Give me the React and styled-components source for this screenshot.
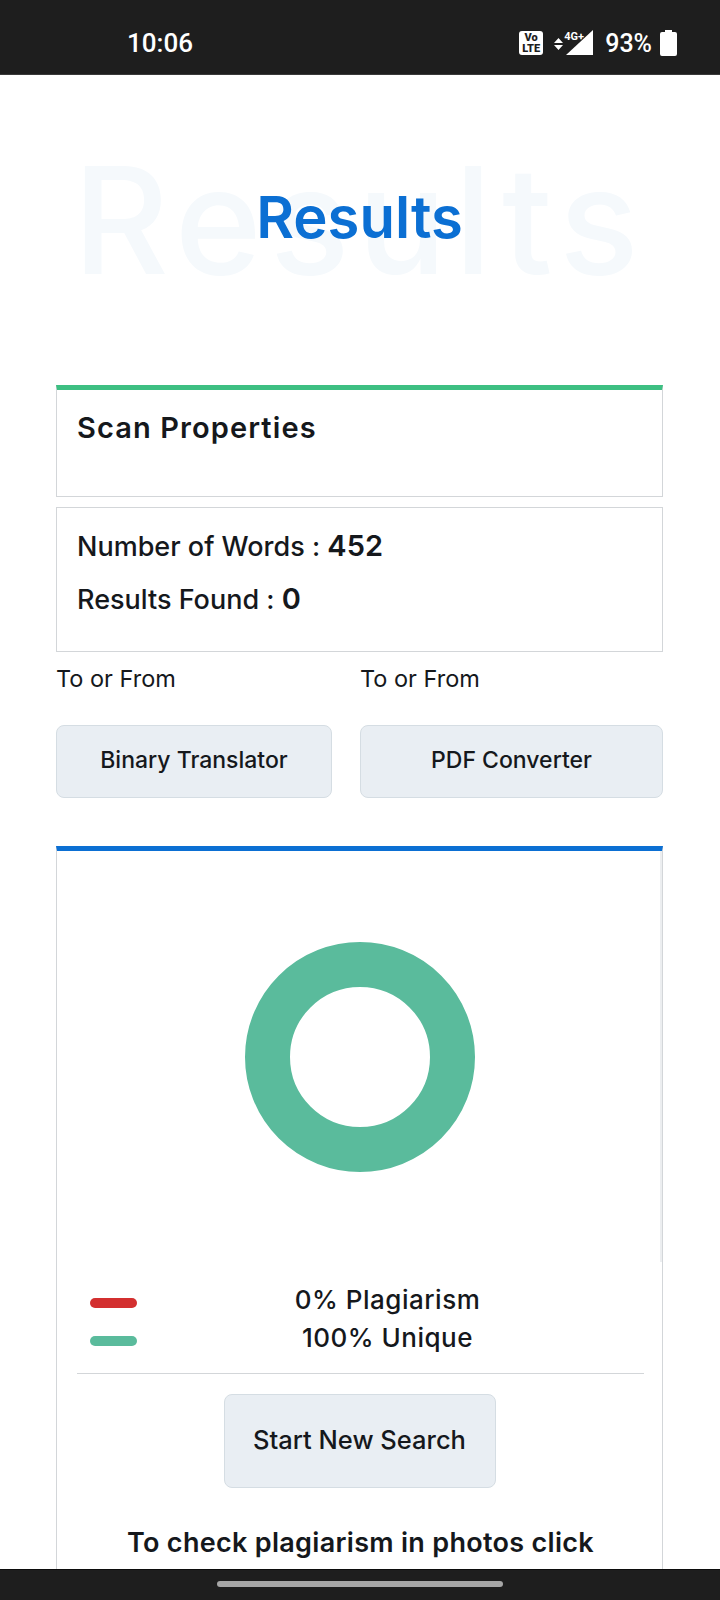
import React from "react";
import styled, { createGlobalStyle } from "styled-components";

const Global = createGlobalStyle`
  html, body { margin: 0; padding: 0; background: #fff; }
  * { box-sizing: border-box; }
  body { font-family: Inter, "Noto Sans", sans-serif; color: #15181c; }
`;

const Screen = styled.div`
  width: 720px;
  height: 1600px;
  display: flex;
  flex-direction: column;
  overflow: hidden;
`;

const StatusBar = styled.div`
  height: 75px;
  flex: none;
  background: #1e1e1e;
  border-bottom: 1px solid #3a3a3a;
  display: flex;
  align-items: center;
  justify-content: space-between;
  padding: 12px 43px 0 127px;
  color: #fff;
  font-family: Roboto, sans-serif;
`;

const Clock = styled.span`
  font-size: 26px;
  font-weight: 500;
`;

const StatusIcons = styled.div`
  display: flex;
  align-items: center;
`;

const VolteBadge = styled.div`
  width: 24px;
  height: 24px;
  border-radius: 3px;
  background: #fff;
  color: #1e1e1e;
  font-size: 11px;
  font-weight: 900;
  line-height: 11px;
  text-align: center;
  padding-top: 1px;
  margin-right: 11px;
`;

const Signal = styled.div`
  position: relative;
  width: 39px;
  height: 26px;
  margin-right: 12px;
`;

const NetworkLabel = styled.span`
  position: absolute;
  left: 10px;
  top: 1px;
  font-size: 11px;
  line-height: 11px;
  font-weight: 700;
`;

const Percent = styled.span`
  font-size: 25px;
  font-weight: 500;
  margin-right: 8px;
`;

const Content = styled.main`
  flex: 1;
  min-height: 0;
  overflow: hidden;
  padding: 0 57px 0 56px;
`;

const Hero = styled.div`
  position: relative;
  height: 310px;
  display: flex;
  align-items: center;
  justify-content: center;
  padding-bottom: 26px;
`;

const Watermark = styled.span`
  position: absolute;
  left: 17px;
  top: 57px;
  font-size: 148px;
  line-height: 1.2;
  font-weight: 500;
  letter-spacing: 8px;
  color: #f5f9fc;
  white-space: nowrap;
`;

const HeroTitle = styled.h1`
  position: relative;
  margin: 0;
  font-size: 58px;
  font-weight: 600;
  color: #0b6fd3;
`;

const Panel = styled.section`
  border: 1px solid #d3d6d9;
  margin-bottom: 10px;
  padding: ${(p) => p.$pad};
  height: ${(p) => p.$height};
  ${(p) => p.$accent && `border-top: 5px solid ${p.$accent};`}
`;

const PanelTitle = styled.h2`
  margin: 0;
  font-size: 29px;
  line-height: 40px;
  font-weight: 600;
  letter-spacing: 1.1px;
`;

const Stat = styled.p`
  margin: 0 0 16px;
  font-size: 27px;
  line-height: 36px;
  font-weight: 500;
`;

const StatValue = styled.b`
  font-size: 29px;
  font-weight: 600;
`;

const LinkGrid = styled.div`
  display: grid;
  grid-template-columns: 276px 303px;
  column-gap: 28px;
  margin-top: 13px;
`;

const LinkColumn = styled.div`
  display: flex;
  flex-direction: column;
  gap: 32px;
`;

const LinkLabel = styled.span`
  font-size: 23.5px;
  line-height: 28px;
`;

const SoftButton = styled.button`
  height: ${(p) => p.$height || "73px"};
  width: ${(p) => p.$width || "100%"};
  background: #e9eef3;
  border: 1px solid #d5dde3;
  border-radius: 8px;
  color: #15181c;
  font-family: inherit;
  font-size: ${(p) => p.$size || "23px"};
  font-weight: 500;
  padding: 0 0 4px;
`;

const ChartCard = styled.section`
  margin-top: 48px;
  border-top: 5px solid #0b6fd3;
  border-left: 1px solid #d3d6d9;
  border-right: 1px solid #d3d6d9;
  padding: 0 18px 0 20px;
  height: 740px;
  display: flex;
  flex-direction: column;
`;

const ChartArea = styled.div`
  height: 411px;
  margin: 0 -18px 0 -20px;
  border-right: 2px solid #eceef0;
  display: flex;
  justify-content: center;
  align-items: center;
  padding-left: 3px;
`;

const Donut = styled.div`
  width: 230px;
  height: 230px;
  border-radius: 50%;
  border: 45px solid #5abb9c;
`;

const Legend = styled.div`
  display: flex;
  flex-direction: column;
  gap: 8px;
  margin-top: 22px;
  padding-bottom: 21px;
  border-bottom: 1px solid #d3d6d9;
`;

const LegendRow = styled.div`
  height: 30px;
  display: grid;
  grid-template-columns: 13px 47px 1fr;
  align-items: center;
`;

const LegendBar = styled.span`
  grid-column: 2;
  height: 10px;
  border-radius: 5px;
  background: ${(p) => p.$color};
  margin-top: 6px;
`;

const LegendText = styled.span`
  grid-column: 3;
  text-align: center;
  font-size: 26px;
  font-weight: 500;
  letter-spacing: 0.5px;
  padding-right: 6px;
`;

const Action = styled.div`
  display: flex;
  justify-content: center;
  margin-top: 20px;
  padding-right: 2px;
`;

const Hint = styled.p`
  margin: 35px -10px 0;
  text-align: center;
  font-size: 27px;
  line-height: 40px;
  font-weight: 600;
  letter-spacing: 0.3px;
  white-space: nowrap;
`;

const NavBar = styled.div`
  height: 31px;
  flex: none;
  background: #1e1e1e;
  border-top: 1px solid #0c0c0c;
  display: flex;
  justify-content: center;
  padding-top: 11px;
`;

const NavPill = styled.div`
  width: 286px;
  height: 6px;
  border-radius: 3px;
  background: #a6a6a6;
`;

export default function App() {
  return (
    <Screen>
      <Global />
      <StatusBar>
        <Clock>10:06</Clock>
        <StatusIcons>
          <VolteBadge>
            Vo
            <br />
            LTE
          </VolteBadge>
          <Signal>
            <NetworkLabel>4G+</NetworkLabel>
            <svg width="39" height="26" viewBox="0 0 39 26" fill="#fff">
              <path d="M12 25 L39 0 V25 Z" />
              <path d="M0 13 L4.5 8 L9 13 Z M0 15 H9 L4.5 20 Z" />
            </svg>
          </Signal>
          <Percent>93%</Percent>
          <svg width="17" height="26" viewBox="0 0 17 26" fill="#fff">
            <path d="M5 0 H12 V2 H15 A2 2 0 0 1 17 4 V24 A2 2 0 0 1 15 26 H2 A2 2 0 0 1 0 24 V4 A2 2 0 0 1 2 2 H5 Z" />
          </svg>
        </StatusIcons>
      </StatusBar>
      <Content>
        <Hero>
          <Watermark>Results</Watermark>
          <HeroTitle>Results</HeroTitle>
        </Hero>
        <Panel $accent="#3dbf82" $height="112px" $pad="18px 20px">
          <PanelTitle>Scan Properties</PanelTitle>
        </Panel>
        <Panel $height="145px" $pad="20px 20px">
          <Stat>
            Number of Words : <StatValue>452</StatValue>
          </Stat>
          <Stat>
            Results Found : <StatValue>0</StatValue>
          </Stat>
        </Panel>
        <LinkGrid>
          <LinkColumn>
            <LinkLabel>To or From</LinkLabel>
            <SoftButton>Binary Translator</SoftButton>
          </LinkColumn>
          <LinkColumn>
            <LinkLabel>To or From</LinkLabel>
            <SoftButton>PDF Converter</SoftButton>
          </LinkColumn>
        </LinkGrid>
        <ChartCard>
          <ChartArea>
            <Donut />
          </ChartArea>
          <Legend>
            <LegendRow>
              <LegendBar $color="#d32f2f" />
              <LegendText>0% Plagiarism</LegendText>
            </LegendRow>
            <LegendRow>
              <LegendBar $color="#5abb9c" />
              <LegendText>100% Unique</LegendText>
            </LegendRow>
          </Legend>
          <Action>
            <SoftButton $width="272px" $height="94px" $size="25.5px">
              Start New Search
            </SoftButton>
          </Action>
          <Hint>To check plagiarism in photos click</Hint>
        </ChartCard>
      </Content>
      <NavBar>
        <NavPill />
      </NavBar>
    </Screen>
  );
}
